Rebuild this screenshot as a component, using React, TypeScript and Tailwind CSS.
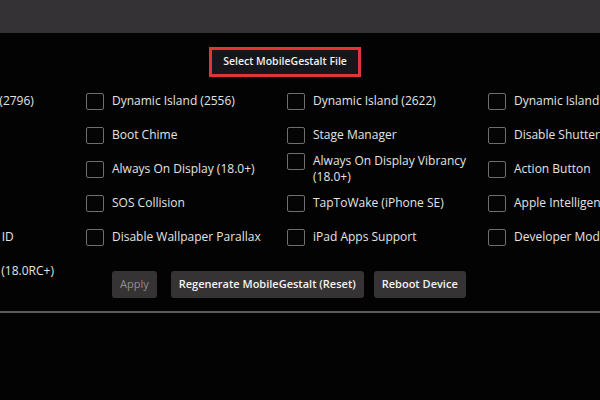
import React from 'react';

type Tweak = { label: string; col: number; row: number };

const tweaks: Tweak[] = [
  { label: 'Dynamic Island (2796)', col: 1, row: 1 },
  { label: 'Charge Limit', col: 1, row: 2 },
  { label: 'Apple Pencil', col: 1, row: 3 },
  { label: 'Storage Info', col: 1, row: 4 },
  { label: 'Allow Dual Face ID', col: 1, row: 5 },
  { label: 'Custom Models (18.0RC+)', col: 1, row: 6 },
  { label: 'Dynamic Island (2556)', col: 2, row: 1 },
  { label: 'Boot Chime', col: 2, row: 2 },
  { label: 'Always On Display (18.0+)', col: 2, row: 3 },
  { label: 'SOS Collision', col: 2, row: 4 },
  { label: 'Disable Wallpaper Parallax', col: 2, row: 5 },
  { label: 'Dynamic Island (2622)', col: 3, row: 1 },
  { label: 'Stage Manager', col: 3, row: 2 },
  { label: 'Always On Display Vibrancy (18.0+)', col: 3, row: 3 },
  { label: 'TapToWake (iPhone SE)', col: 3, row: 4 },
  { label: 'iPad Apps Support', col: 3, row: 5 },
  { label: 'Dynamic Island (2868)', col: 4, row: 1 },
  { label: 'Disable Shutter Sound', col: 4, row: 2 },
  { label: 'Action Button', col: 4, row: 3 },
  { label: 'Apple Intelligence', col: 4, row: 4 },
  { label: 'Developer Mode', col: 4, row: 5 },
];

const colClass: Record<number, string> = {
  1: 'col-start-1',
  2: 'col-start-2',
  3: 'col-start-3',
  4: 'col-start-4',
};

const rowClass: Record<number, string> = {
  1: 'row-start-1',
  2: 'row-start-2',
  3: 'row-start-3',
  4: 'row-start-4',
  5: 'row-start-5',
  6: 'row-start-6',
};

const CheckItem: React.FC<{ tweak: Tweak }> = ({ tweak }) => (
  <label className={`${colClass[tweak.col]} ${rowClass[tweak.row]} flex items-start gap-[8px] pr-[4px]`}>
    <span className="w-[18px] h-[17px] shrink-0 border border-[#6e6e6e] rounded-[2px] bg-[#050505]" />
    <span className="text-[12px] leading-[16px] text-[#e3e3e3] whitespace-normal">{tweak.label}</span>
  </label>
);

const ActionButton: React.FC<{ children: React.ReactNode; disabled?: boolean }> = ({ children, disabled }) => (
  <button
    className={`h-[27px] px-[8px] rounded-[3px] bg-[#363335] text-[11px] ${disabled ? 'text-[#8f8f8f] font-normal' : 'text-[#f2f2f2] font-semibold'}`}
  >
    {children}
  </button>
);

const App: React.FC = () => {
  return (
    <div className="w-[600px] h-[400px] overflow-hidden bg-[#030303]" style={{ fontFamily: '"Open Sans", "Noto Sans", sans-serif' }}>
      <div className="h-[33px] bg-[#353236]" />

      <div className="flex justify-center pt-[14px] pr-[30px]">
        <div className="border-[3px] border-[#e3343c] bg-[#16161b] px-[11px] h-[30px] flex items-center">
          <span className="text-[10.5px] font-semibold text-[#f0f0f0]">Select MobileGestalt File</span>
        </div>
      </div>

      <div className="-ml-[115px] mt-[7px] grid grid-cols-[repeat(4,201px)] grid-rows-[repeat(6,34px)] items-center w-[804px]">
        {tweaks.map((t) => (
          <CheckItem key={t.label} tweak={t} />
        ))}
        <div className="col-start-2 col-span-3 row-start-6 self-start mt-[17px] pl-[26px] flex gap-[14px]">
          <ActionButton disabled>Apply</ActionButton>
          <div className="flex gap-[10px]">
            <ActionButton>Regenerate MobileGestalt (Reset)</ActionButton>
            <ActionButton>Reboot Device</ActionButton>
          </div>
        </div>
      </div>

      <div className="mt-[23px] h-[2px] bg-[#5c5c5c]" />
    </div>
  );
};

export default App;
